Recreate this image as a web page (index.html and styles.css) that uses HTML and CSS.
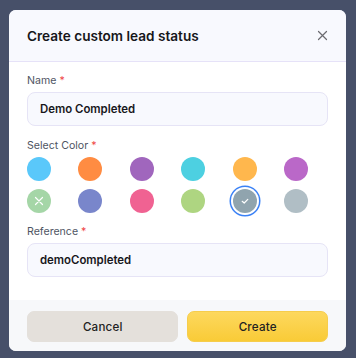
FILE: index.html
```html
<!DOCTYPE html>
<html>
  <head>
    <meta name="viewport" content="width=device-width, initial-scale=1" />
    <link rel="stylesheet" href="styles.css">
  </head>
  <body>
    <div class="modal">
      <div class="modal-header">
        <h2 class="modal-title">Create custom lead status</h2>
        <button class="close-btn" type="button" aria-label="Close">
          <svg width="11" height="11" viewBox="0 0 11 11">
            <path d="M1.5 1.5 L9.5 9.5 M9.5 1.5 L1.5 9.5" stroke="#6b6b70" stroke-width="1.2" stroke-linecap="round" fill="none" />
          </svg>
        </button>
      </div>

      <div class="modal-body">
        <label class="field-label">Name <span class="req">*</span></label>
        <div class="text-input">Demo Completed</div>

        <label class="field-label">Select Color <span class="req">*</span></label>
        <div class="swatches">
          <span class="swatch" style="background:#5ac8fa"></span>
          <span class="swatch" style="background:#ff8c42"></span>
          <span class="swatch" style="background:#a066bd"></span>
          <span class="swatch" style="background:#4dd0e1"></span>
          <span class="swatch" style="background:#ffb74d"></span>
          <span class="swatch" style="background:#ba68c8"></span>

          <span class="swatch" style="background:#a5d6a7">
            <svg width="10" height="10" viewBox="0 0 10 10">
              <path d="M1.5 1.5 L8.5 8.5 M8.5 1.5 L1.5 8.5" stroke="#fff" stroke-width="1.2" stroke-linecap="round" fill="none" />
            </svg>
          </span>
          <span class="swatch" style="background:#7986cb"></span>
          <span class="swatch" style="background:#f06292"></span>
          <span class="swatch" style="background:#aed581"></span>
          <span class="swatch selected" style="background:#90a4ae">
            <svg width="10" height="10" viewBox="0 0 10 10">
              <path d="M2.2 5.3 L4.2 7 L7.8 3.4" stroke="#fff" stroke-width="1.2" stroke-linecap="round" stroke-linejoin="round" fill="none" />
            </svg>
          </span>
          <span class="swatch" style="background:#b0bec5"></span>
        </div>

        <label class="field-label">Reference <span class="req">*</span></label>
        <div class="text-input last">demoCompleted</div>
      </div>

      <div class="modal-footer">
        <button class="btn btn-cancel" type="button">Cancel</button>
        <button class="btn btn-create" type="button">Create</button>
      </div>
    </div>
  </body>
</html>
```

FILE: styles.css
```css
  body {
    margin: 0;
    background-color: #475069;
    font-family: Inter, "Noto Sans", Arial, sans-serif;
  }

  .modal {
    margin: 10px 10px 0 9px;
    width: 337px;
    background-color: #ffffff;
    border-radius: 7px;
    overflow: hidden;
  }

  .modal-header {
    height: 51px;
    display: flex;
    align-items: center;
    justify-content: space-between;
    padding: 0 18px;
    background-color: #f8f9fe;
    border-bottom: 1px solid #e6e2f8;
  }

  .modal-title {
    margin: 0;
    font-size: 13.6px;
    font-weight: 600;
    color: #16161a;
  }

  .close-btn {
    background: none;
    border: none;
    padding: 0;
    margin-right: -2px;
    width: 16px;
    height: 16px;
    display: flex;
    align-items: center;
    justify-content: center;
  }

  .modal-body {
    padding: 12px 18px 23px 18px;
  }

  .field-label {
    display: block;
    font-size: 10.6px;
    line-height: 14px;
    color: #4f5563;
    margin-bottom: 4px;
  }

  .req {
    color: #ef4444;
  }

  .text-input {
    height: 32px;
    box-sizing: content-box;
    border: 1px solid #e6e4f6;
    border-radius: 8px;
    background-color: #f8f9fe;
    padding: 0 12px;
    display: flex;
    align-items: center;
    font-size: 11.4px;
    font-weight: 600;
    color: #17171b;
    margin-bottom: 13px;
  }

  .text-input.last {
    margin-bottom: 0;
  }

  .swatches {
    display: grid;
    grid-template-columns: repeat(6, 24px);
    column-gap: 27.4px;
    row-gap: 8px;
    margin-bottom: 12px;
  }

  .swatch {
    width: 24px;
    height: 24px;
    border-radius: 50%;
    display: flex;
    align-items: center;
    justify-content: center;
  }

  .swatch.selected {
    box-shadow: 0 0 0 2px #ffffff, 0 0 0 3.5px #3b82f6;
  }

  .modal-footer {
    background-color: #f7f8fa;
    padding: 11px 18px 9px 18px;
    display: flex;
    gap: 9px;
  }

  .btn {
    height: 31px;
    border-radius: 7px;
    font-family: Inter, "Noto Sans", Arial, sans-serif;
    font-size: 11.6px;
    font-weight: 500;
    letter-spacing: 0.2px;
    color: #222222;
    cursor: pointer;
  }

  .btn-cancel {
    width: 152px;
    background-color: #e4e0db;
    border: 1px solid #e4e0db;
  }

  .btn-create {
    width: 141px;
    background: linear-gradient(#fdd85e, #f9cb37);
    border: 1px solid #f6cd4c;
  }
```
